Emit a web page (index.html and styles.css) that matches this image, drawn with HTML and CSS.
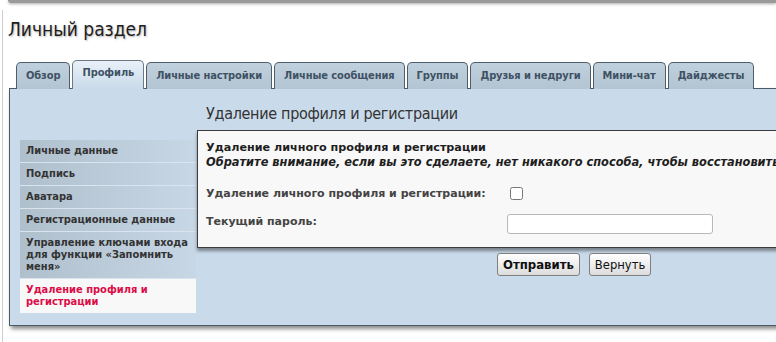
FILE: index.html
```html
<!DOCTYPE html>
<html lang="ru">
<head>
    <meta charset="UTF-8">
    <title>Личный раздел</title>
    <link rel="stylesheet" href="styles.css">
</head>
<body>
    <div class="topbar"></div>
    <div class="page">
        <h1 class="page-title">Личный раздел</h1>

        <ul class="tabs">
            <li class="tab">Обзор</li>
            <li class="tab active">Профиль</li>
            <li class="tab">Личные настройки</li>
            <li class="tab">Личные сообщения</li>
            <li class="tab">Группы</li>
            <li class="tab">Друзья и недруги</li>
            <li class="tab">Мини-чат</li>
            <li class="tab">Дайджесты</li>
        </ul>

        <div class="panel">
            <h2 class="panel-title">Удаление профиля и регистрации</h2>

            <ul class="side-menu">
                <li class="side-item">Личные данные</li>
                <li class="side-item">Подпись</li>
                <li class="side-item">Аватара</li>
                <li class="side-item">Регистрационные данные</li>
                <li class="side-item">Управление ключами входа для функции «Запомнить меня»</li>
                <li class="side-item active">Удаление профиля и регистрации</li>
            </ul>

            <div class="content">
                <form class="form-box">
                    <div class="form-head">
                        <strong>Удаление личного профиля и регистрации</strong>
                        <em>Обратите внимание, если вы это сделаете, нет никакого способа, чтобы восстановить ваш профиль.</em>
                    </div>
                    <div class="form-row">
                        <label class="form-label" for="delete">Удаление личного профиля и регистрации:</label>
                        <input type="checkbox" id="delete" class="check">
                    </div>
                    <div class="form-row row-pass">
                        <label class="form-label" for="pass">Текущий пароль:</label>
                        <input type="password" id="pass" class="text-input">
                    </div>
                </form>
                <div class="buttons">
                    <button class="btn btn-main">Отправить</button>
                    <button class="btn">Вернуть</button>
                </div>
            </div>
        </div>
    </div>
</body>
</html>
```

FILE: styles.css
```css
body {
    margin: 0;
    font-family: "DejaVu Sans Condensed", "DejaVu Sans", Verdana, sans-serif;
    background-color: #fff;
    color: #333;
    overflow: hidden;
}

.topbar {
    height: 3px;
    margin-left: 8px;
    background-color: #9a9a9a;
    border-bottom-left-radius: 3px;
    box-shadow: 0 1px 3px rgba(0, 0, 0, 0.35);
}

.page {
    margin: 7px 0 0 2px;
    padding: 8px 0 0 5px;
    border-left: 1px solid #cfcfcf;
    height: 340px;
}

.page-title {
    margin: 0;
    font-size: 19px;
    line-height: 22px;
    font-weight: normal;
    color: #1e1e1e;
    text-shadow: 1px 1px 2px rgba(0, 0, 0, 0.3);
}

/* Вкладки */
.tabs {
    list-style: none;
    display: flex;
    align-items: flex-end;
    gap: 2px;
    margin: 20px 0 -1px 8px;
    padding: 0;
    position: relative;
    z-index: 1;
}

.tab {
    height: 26px;
    line-height: 26px;
    padding: 0 9px;
    font-size: 11px;
    font-weight: bold;
    letter-spacing: -0.1px;
    color: #3e5264;
    background: linear-gradient(#c0d0dd, #b3c4d2);
    border: 1px solid #4e5e6b;
    border-bottom: none;
    border-radius: 5px 5px 0 0;
    white-space: nowrap;
}

.tab.active {
    height: 28px;
    line-height: 24px;
    background: linear-gradient(#e9f1f8, #c9daea);
    border-color: #6a7a86;
}

/* Основная панель */
.panel {
    display: grid;
    grid-template-columns: 177px 1fr;
    width: 800px;
    margin-left: 1px;
    padding: 15px 0 12px 10px;
    background-color: #c9daea;
    border: 1px solid #4a5a66;
    box-shadow: 2px 3px 4px rgba(0, 0, 0, 0.45);
}

.panel-title {
    grid-column: 2;
    margin: 0 0 7px 0;
    padding-left: 9px;
    font-size: 16px;
    line-height: 19px;
    font-weight: normal;
    letter-spacing: -0.3px;
    color: #333;
}

.side-menu {
    grid-column: 1;
    grid-row: 2;
    list-style: none;
    margin: 10px 0 0 0;
    padding: 0;
    width: 176px;
}

.side-item {
    padding: 5px 4px 5px 6px;
    font-size: 11px;
    line-height: 12px;
    font-weight: bold;
    color: #333;
    background: linear-gradient(to right, #afbfcc, #c7d7e5);
    border-bottom: 1px solid #d9e4ee;
}

.side-item.active {
    color: #dc0c47;
    background: #f8f8f8;
    border-bottom: none;
}

.content {
    grid-column: 2;
    grid-row: 2;
}

/* Форма удаления */
.form-box {
    margin: 0;
    padding: 10px 8px 13px 8px;
    background-color: #f8f8f8;
    border: 1px solid #3c3c3c;
    box-shadow: 0 3px 3px rgba(0, 0, 0, 0.4);
    font-family: "DejaVu Sans", Verdana, sans-serif;
    font-size: 11px;
    white-space: nowrap;
}

.form-head {
    display: flex;
    flex-direction: column;
    line-height: 14px;
    color: #1e1e1e;
    margin-bottom: 15px;
}

.form-head strong {
    font-size: 11.2px;
}

.form-head em {
    font-size: 11.4px;
    font-weight: bold;
}

.form-row {
    display: flex;
    align-items: flex-start;
    margin-top: 8px;
}

.row-pass {
    margin-top: 12px;
}

.form-label {
    width: 301px;
    font-weight: bold;
    color: #444;
    line-height: 16px;
    padding-top: 2px;
}

.row-pass .form-label {
    padding-top: 0;
}

.check {
    width: 13px;
    height: 13px;
    margin: 3px 0 0 3px;
}

.text-input {
    width: 206px;
    height: 20px;
    box-sizing: border-box;
    border: 1px solid #b8b8b8;
    border-radius: 3px;
    background-color: #fff;
}

.buttons {
    display: flex;
    gap: 9px;
    margin-top: 5px;
    padding-left: 300px;
}

.btn {
    height: 23px;
    padding: 0 5px;
    font-family: "DejaVu Sans", Verdana, sans-serif;
    font-size: 11.6px;
    color: #111;
    background: linear-gradient(#ffffff, #dcdcdc);
    border: 1px solid #7f7f7f;
    border-radius: 3px;
}

.btn-main {
    font-weight: bold;
    font-family: "DejaVu Sans Condensed", "DejaVu Sans", sans-serif;
    font-size: 13px;
}
```
